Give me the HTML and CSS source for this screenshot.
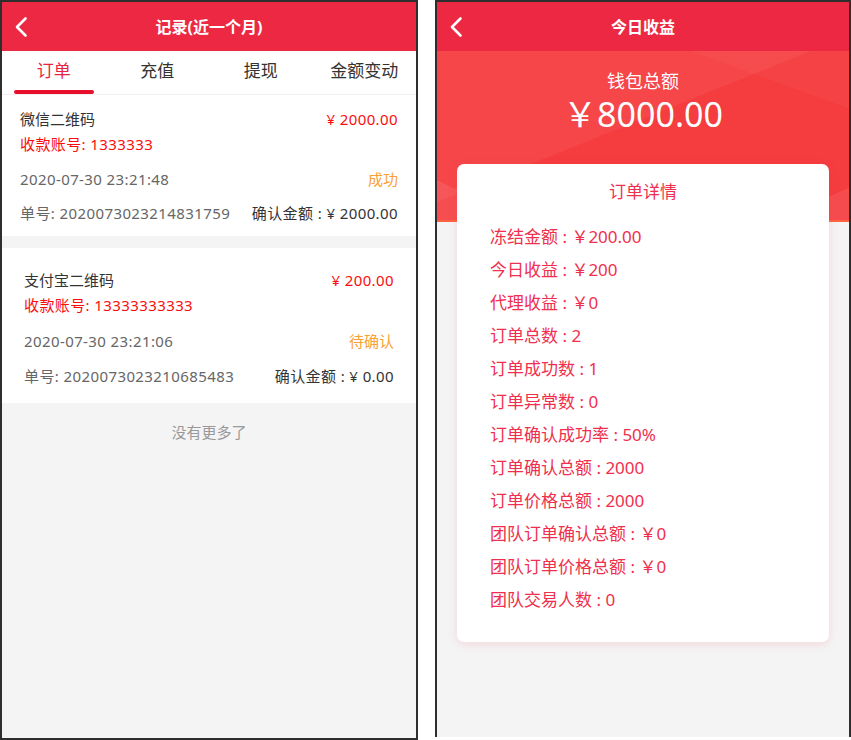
FILE: index.html
```html
<!DOCTYPE html>
<html lang="zh-CN">
<head>
<meta charset="utf-8">
<title>记录</title>
<link rel="stylesheet" href="styles.css">
</head>
<body>
<div class="screens">
  <section class="phone phone-left">
    <header class="topbar">
      <span class="back"><svg width="14" height="22" viewBox="0 0 14 22"><path d="M11.5 2.5 L3 11 L11.5 19.5" fill="none" stroke="#fff" stroke-width="2.6" stroke-linecap="round" stroke-linejoin="round"/></svg></span>
      <h1 class="title">记录(近一个月)</h1>
      <span></span>
    </header>
    <nav class="tabs">
      <div class="tab active">订单</div>
      <div class="tab">充值</div>
      <div class="tab">提现</div>
      <div class="tab">金额变动</div>
    </nav>
    <div class="order order-a">
      <div class="row"><span class="name">微信二维码</span><span class="amt">¥ 2000.00</span></div>
      <div class="row account">收款账号: 1333333</div>
      <div class="row row-date"><span class="date">2020-07-30 23:21:48</span><span class="status">成功</span></div>
      <div class="row row-no"><span class="no">单号: 2020073023214831759</span><span class="confirm">确认金额 : ¥ 2000.00</span></div>
    </div>
    <div class="order order-b">
      <div class="row"><span class="name">支付宝二维码</span><span class="amt">¥ 200.00</span></div>
      <div class="row account">收款账号: 13333333333</div>
      <div class="row row-date"><span class="date">2020-07-30 23:21:06</span><span class="status">待确认</span></div>
      <div class="row row-no"><span class="no">单号: 2020073023210685483</span><span class="confirm">确认金额 : ¥ 0.00</span></div>
    </div>
    <p class="nomore">没有更多了</p>
  </section>

  <section class="phone phone-right">
    <header class="topbar">
      <span class="back"><svg width="14" height="22" viewBox="0 0 14 22"><path d="M11.5 2.5 L3 11 L11.5 19.5" fill="none" stroke="#fff" stroke-width="2.6" stroke-linecap="round" stroke-linejoin="round"/></svg></span>
      <h1 class="title">今日收益</h1>
      <span></span>
    </header>
    <div class="banner">
      <div class="wallet-label">钱包总额</div>
      <div class="wallet-amount">￥8000.00</div>
    </div>
    <div class="detail">
      <div class="detail-title">订单详情</div>
      <ul class="detail-list">
        <li>冻结金额 : ￥200.00</li>
        <li>今日收益 : ￥200</li>
        <li>代理收益 : ￥0</li>
        <li>订单总数 : 2</li>
        <li>订单成功数 : 1</li>
        <li>订单异常数 : 0</li>
        <li>订单确认成功率 : 50%</li>
        <li>订单确认总额 : 2000</li>
        <li>订单价格总额 : 2000</li>
        <li>团队订单确认总额 : ￥0</li>
        <li>团队订单价格总额 : ￥0</li>
        <li>团队交易人数 : 0</li>
      </ul>
    </div>
  </section>
</div>
</body>
</html>
```

FILE: styles.css
```css
* { box-sizing: border-box; }
html, body { margin: 0; padding: 0; background: #fff; }
body {
  font-family: "Noto Sans", "Noto Sans CJK SC", sans-serif;
  color: #333;
}
.screens {
  display: flex;
  gap: 17px;
  width: 851px;
}
.phone {
  background: #f4f4f4;
  border: 2px solid #2e2e2e;
  overflow: hidden;
}
.phone-left { width: 418px; height: 740px; }
.phone-right { width: 416px; height: 737px; border-bottom: 0; }

.topbar {
  height: 49px;
  background: #ec2843;
  display: grid;
  grid-template-columns: 48px 1fr 48px;
  align-items: center;
}
.back {
  display: flex;
  align-items: center;
  padding-left: 12px;
  padding-top: 1px;
}
.title {
  margin: 0;
  text-align: center;
  color: #fff;
  font-size: 16px;
  font-weight: 700;
  line-height: 24px;
}

.tabs {
  display: grid;
  grid-template-columns: repeat(4, 1fr);
  background: #fff;
  border-bottom: 1px solid #efefef;
}
.tab {
  height: 43px;
  display: flex;
  flex-direction: column;
  align-items: center;
  font-size: 17px;
  line-height: 39px;
  color: #333;
}
.tab.active { color: #e8233f; }
.tab.active::after {
  content: "";
  width: 80px;
  height: 4px;
  border-radius: 2px;
  background: #e80f2c;
}

.order {
  background: #fff;
  font-size: 15px;
  letter-spacing: 0.4px;
}
.order-a { padding: 12px 18px 10px 18px; }
.order-b { margin-top: 12px; padding: 19.5px 22px 14.5px 22px; }
.row {
  display: flex;
  justify-content: space-between;
  line-height: 25px;
  white-space: nowrap;
}
.name { color: #333; letter-spacing: 0; }
.amt { color: #fa0d0d; }
.account { color: #fa0d0d; }
.row-date { margin-top: 10px; }
.order-b .row-date { margin-top: 11px; }
.row-no { margin-top: 9px; }
.order-b .row-no { margin-top: 10px; }
.date { color: #666; }
.status { color: #fba033; letter-spacing: 0; }
.no { color: #666; }
.confirm { color: #333; }

.nomore {
  margin: 19px 0 0;
  text-align: center;
  font-size: 15px;
  line-height: 20px;
  color: #999;
}

.banner {
  height: 171px;
  padding-top: 18px;
  text-align: center;
  color: #fff;
  background:
    linear-gradient(158deg, rgba(255,255,255,0.05) 0 45%, rgba(255,255,255,0) 45%),
    linear-gradient(200deg, rgba(255,255,255,0.03) 0 18%, rgba(255,255,255,0) 18%),
    linear-gradient(25deg, rgba(255,255,255,0.09) 0 11%, rgba(255,255,255,0) 11%),
    linear-gradient(-25deg, rgba(255,255,255,0.08) 0 9%, rgba(255,255,255,0) 9%),
    #f53c3f;
  border-bottom: 2px solid #fd6340;
}
.wallet-label {
  font-size: 18px;
  line-height: 24px;
}
.wallet-amount {
  font-size: 34px;
  line-height: 42px;
}

.detail {
  margin: -58px 20px 0 20px;
  background: #fff;
  border-radius: 7px;
  box-shadow: 0 2px 10px rgba(236, 60, 80, 0.16);
  padding: 16px 0 26.5px 33px;
  color: #ef2f4d;
  position: relative;
}
.detail-title {
  text-align: center;
  font-size: 17px;
  line-height: 24px;
  margin-left: -33px;
}
.detail-list {
  list-style: none;
  margin: 15.5px 0 0;
  padding: 0;
  font-size: 17px;
  line-height: 33px;
}
```
